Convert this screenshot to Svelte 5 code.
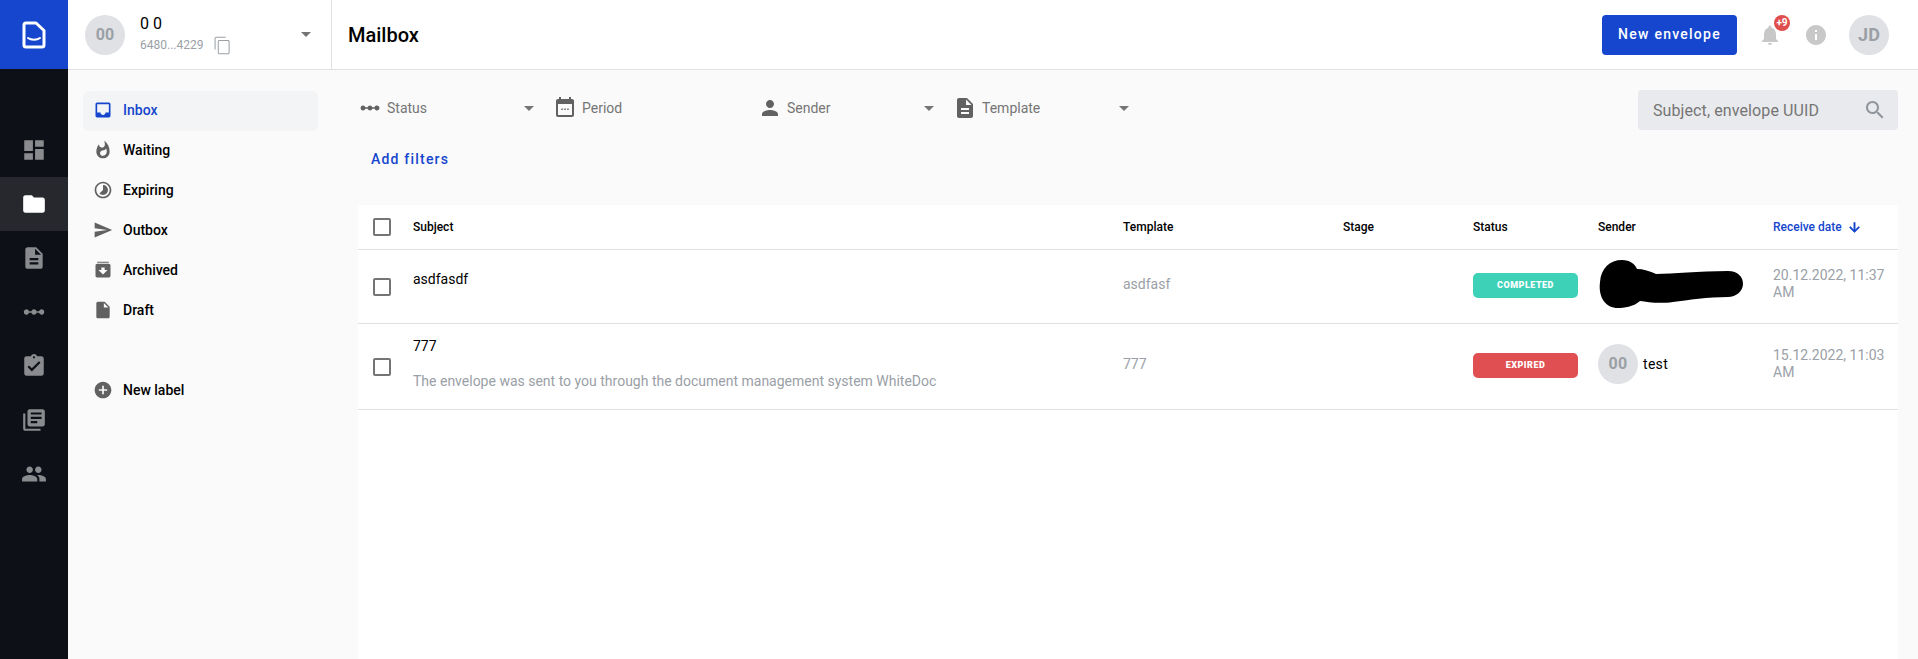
<script>
	// sidebar icons
	const railIcons = [
		'M3 13h8V3H3v10zm0 8h8v-6H3v6zm10 0h8V11h-8v10zm0-18v6h8V3h-8z',
		'M10 4H4c-1.1 0-1.99.9-1.99 2L2 18c0 1.1.9 2 2 2h16c1.1 0 2-.9 2-2V8c0-1.1-.9-2-2-2h-8l-2-2z',
		'M14 2H6c-1.1 0-1.99.9-1.99 2L4 20c0 1.1.89 2 1.99 2H18c1.1 0 2-.9 2-2V8l-6-6zm2 16H8v-2h8v2zm0-4H8v-2h8v2zm-3-5V3.5L18.5 9H13z',
		'M5 9.5a2.5 2.5 0 0 1 2.4 1.7h2.2a2.5 2.5 0 0 1 4.8 0h2.2a2.5 2.5 0 1 1 0 1.6h-2.2a2.5 2.5 0 0 1-4.8 0H7.4a2.5 2.5 0 1 1-2.4-3.3z',
		'M19 3h-4.18C14.4 1.84 13.3 1 12 1c-1.3 0-2.4.84-2.82 2H5c-1.1 0-2 .9-2 2v14c0 1.1.9 2 2 2h14c1.1 0 2-.9 2-2V5c0-1.1-.9-2-2-2zm-7 0c.55 0 1 .45 1 1s-.45 1-1 1-1-.45-1-1 .45-1 1-1zm-2 14l-4-4 1.41-1.41L10 14.17l6.59-6.59L18 9l-8 8z',
		'M4 6H2v14c0 1.1.9 2 2 2h14v-2H4V6zm16-4H8c-1.1 0-2 .9-2 2v12c0 1.1.9 2 2 2h12c1.1 0 2-.9 2-2V4c0-1.1-.9-2-2-2zm-1 9H9V9h10v2zm-4 4H9v-2h6v2zm4-8H9V5h10v2z',
		'M16 11c1.66 0 2.99-1.34 2.99-3S17.66 5 16 5c-1.66 0-3 1.34-3 3s1.34 3 3 3zm-8 0c1.66 0 2.99-1.34 2.99-3S9.66 5 8 5C6.34 5 5 6.34 5 8s1.34 3 3 3zm0 2c-2.33 0-7 1.17-7 3.5V19h14v-2.5c0-2.33-4.67-3.5-7-3.5zm8 0c-.29 0-.62.02-.97.05 1.16.84 1.97 1.97 1.97 3.45V19h6v-2.5c0-2.33-4.67-3.5-7-3.5z'
	];

	const boxes = [
		{ label: 'Inbox', active: true, d: 'M19 3H5c-1.1 0-2 .9-2 2v14c0 1.1.9 2 2 2h14c1.1 0 2-.9 2-2V5c0-1.1-.9-2-2-2zm0 12h-4c0 1.66-1.35 3-3 3s-3-1.34-3-3H5V5h14v10z' },
		{ label: 'Waiting', d: 'M13.5.67s.74 2.65.74 4.8c0 2.06-1.35 3.73-3.41 3.73-2.07 0-3.63-1.67-3.63-3.73l.03-.36C5.21 7.51 4 10.62 4 14c0 4.42 3.58 8 8 8s8-3.58 8-8C20 8.61 17.41 3.8 13.5.67zM11.71 19c-1.78 0-3.22-1.4-3.22-3.14 0-1.62 1.05-2.76 2.81-3.12 1.77-.36 3.6-1.21 4.62-2.58.39 1.29.59 2.65.59 4.04 0 2.65-2.15 4.8-4.8 4.8z' },
		{ label: 'Expiring', d: 'M16.24 7.76C15.07 6.59 13.54 6 12 6v6l-4.24 4.24c2.34 2.34 6.14 2.34 8.49 0 2.34-2.34 2.34-6.14-.01-8.48zM12 2C6.48 2 2 6.48 2 12s4.48 10 10 10 10-4.48 10-10S17.52 2 12 2zm0 18c-4.42 0-8-3.58-8-8s3.58-8 8-8 8 3.58 8 8-3.58 8-8 8z' },
		{ label: 'Outbox', d: 'M2.01 21L23 12 2.01 3 2 10l15 2-15 2z' },
		{ label: 'Archived', d: 'M5 2h14v1.2H5zM19 4.500H5c-1.1 0-2 .9-2 2V19c0 1.1.9 2 2 2h14c1.1 0 2-.9 2-2V6.500c0-1.100-.9-2-2-2zM12 17.500L6.500 12H10V9h4v3h3.500z' },
		{ label: 'Draft', d: 'M6 2c-1.1 0-1.99.9-1.99 2L4 20c0 1.1.89 2 1.99 2H18c1.1 0 2-.9 2-2V8l-6-6H6zm7 7V3.5L18.5 9H13z' }
	];

	const filters = [
		{ label: 'Status', arrow: true, d: railIcons[3] },
		{ label: 'Period', wide: true, d: 'M19 3h-1V1h-2v2H8V1H6v2H5c-1.11 0-1.99.9-1.99 2L3 19c0 1.1.89 2 2 2h14c1.1 0 2-.9 2-2V5c0-1.1-.9-2-2-2zm0 16H5V8h14v11zM8.300 12.500h1.500V14H8.300zm2.950 0h1.500V14h-1.500zm2.950 0h1.500V14h-1.500z' },
		{ label: 'Sender', arrow: true, d: 'M12 12c2.21 0 4-1.79 4-4s-1.79-4-4-4-4 1.79-4 4 1.79 4 4 4zm0 2c-2.67 0-8 1.34-8 4v2h16v-2c0-2.66-5.33-4-8-4z' },
		{ label: 'Template', arrow: true, d: railIcons[2] }
	];

	const rows = [
		{ subject: 'asdfasdf', note: '', template: 'asdfasf', status: 'COMPLETED', kind: 'done', sender: '', date: '20.12.2022, 11:37 AM' },
		{ subject: '777', note: 'The envelope was sent to you through the document management system WhiteDoc', template: '777', status: 'EXPIRED', kind: 'expired', sender: 'test', date: '15.12.2022, 11:03 AM' }
	];
</script>

<div class="app">
	<aside class="rail">
		<div class="logo">
			<svg width="24" height="28" viewBox="0 0 24 28" fill="none" stroke="#fff" stroke-width="3" stroke-linejoin="round" stroke-linecap="round">
				<path d="M4 2h10l8 7.5V24a2 2 0 0 1-2 2H4a2 2 0 0 1-2-2V4a2 2 0 0 1 2-2z" />
				<path d="M6 17c3 2.200 9 2.200 12 0" stroke-width="2" />
			</svg>
		</div>
		<nav class="rail-nav">
			{#each railIcons as d, i}
				<div class="rail-item" class:current={i === 1}>
					<svg width="26" height="26" viewBox="0 0 24 24"><path {d} /></svg>
				</div>
			{/each}
		</nav>
	</aside>

	<div class="page">
		<header class="topbar">
			<div class="account">
				<div class="avatar">00</div>
				<div class="account-text">
					<div class="account-name">0 0</div>
					<div class="account-id">
						6480...4229
						<svg class="copy" width="19" height="19" viewBox="0 0 24 24"><path d="M16 1H4c-1.1 0-2 .9-2 2v14h1.300V2.300H16V1zm3 4H8c-1.1 0-2 .9-2 2v14c0 1.1.9 2 2 2h11c1.1 0 2-.9 2-2V7c0-1.1-.9-2-2-2zm.7 16c0 .4-.3.7-.7.7H8c-.4 0-.7-.3-.7-.7V7c0-.4.3-.7.7-.7h11c.4 0 .7.3.7.7v14z" /></svg>
					</div>
				</div>
				<span class="caret account-caret"></span>
			</div>
			<h1>Mailbox</h1>
			<button class="new-btn">New envelope</button>
			<div class="bell">
				<svg width="24" height="24" viewBox="0 0 24 24"><path d="M12 22c1.1 0 2-.9 2-2h-4c0 1.1.89 2 2 2zm6-6v-5c0-3.07-1.64-5.64-4.5-6.32V4c0-.83-.67-1.5-1.5-1.5s-1.5.67-1.5 1.5v.68C7.63 5.36 6 7.92 6 11v5l-2 2v1h16v-1l-2-2z" /></svg>
				<span class="badge">+9</span>
			</div>
			<svg class="info" width="24" height="24" viewBox="0 0 24 24"><path d="M12 2C6.48 2 2 6.48 2 12s4.48 10 10 10 10-4.48 10-10S17.52 2 12 2zm1 15h-2v-6h2v6zm0-8h-2V7h2v2z" /></svg>
			<div class="avatar user">JD</div>
		</header>

		<div class="body">
			<nav class="boxes">
				{#each boxes as box}
					<div class="box" class:active={box.active}>
						<svg width="20" height="20" viewBox="0 0 24 24"><path fill-rule="evenodd" d={box.d} /></svg>
						{box.label}
					</div>
				{/each}
				<div class="box new-label">
					<svg width="20" height="20" viewBox="0 0 24 24"><path d="M12 2C6.48 2 2 6.48 2 12s4.48 10 10 10 10-4.48 10-10S17.52 2 12 2zm5 11h-4v4h-2v-4H7v-2h4V7h2v4h4v2z" /></svg>
					New label
				</div>
			</nav>

			<main class="content">
				<div class="toolbar">
					<div class="filters">
						{#each filters as f}
							<div class="filter" class:wide={f.wide}>
								<svg width="24" height="24" viewBox="0 0 24 24"><path d={f.d} /></svg>
								<span>{f.label}</span>
								{#if f.arrow}<span class="caret"></span>{/if}
							</div>
						{/each}
					</div>
					<div class="search">
						<span>Subject, envelope UUID</span>
						<svg width="24" height="24" viewBox="0 0 24 24"><path d="M15.5 14h-.79l-.28-.27C15.41 12.59 16 11.11 16 9.5 16 5.91 13.09 3 9.5 3S3 5.91 3 9.5 5.91 16 9.5 16c1.61 0 3.09-.59 4.23-1.57l.27.28v.79l5 4.99L20.49 19l-4.99-5zm-6 0C7.01 14 5 11.99 5 9.5S7.01 5 9.5 5 14 7.01 14 9.5 11.99 14 9.5 14z" /></svg>
					</div>
				</div>
				<button class="add-filters">Add filters</button>

				<section class="table">
					<div class="row head">
						<span class="check"></span>
						<span>Subject</span>
						<span>Template</span>
						<span>Stage</span>
						<span>Status</span>
						<span>Sender</span>
						<span class="sorted">
							Receive date
							<svg width="15" height="15" viewBox="0 0 24 24"><path d="M20 12l-1.41-1.41L13 16.17V4h-2v12.17l-5.58-5.59L4 12l8 8 8-8z" /></svg>
						</span>
					</div>
					{#each rows as row}
						<div class="row">
							<span class="check down"></span>
							<div>
								<div class="subject">{row.subject}</div>
								{#if row.note}
									<div class="note">{row.note}</div>
								{:else}
									<div class="no-note"></div>
								{/if}
							</div>
							<span class="muted">{row.template}</span>
							<span></span>
							<span class="pill {row.kind}">{row.status}</span>
							<div class="sender">
								{#if row.sender}
									<div class="avatar">00</div>
									<span>{row.sender}</span>
								{:else}
									<!-- redacted in the source picture -->
									<svg class="blot" width="145" height="48" viewBox="0 0 145 48"><path d="M2 22C3 8 12 0 24 0c8 0 13 4 15 9 6 0 13 2 19 5 17 0 42-3 72-3 10 0 15 6 15 13s-7 13-15 13c-20 0-40 3-55 5-15 2-25 0-33-1-7 6-16 7-22 7C8 48 0 38 2 22z" /></svg>
								{/if}
							</div>
							<span class="muted date">{row.date}</span>
						</div>
					{/each}
				</section>
			</main>
		</div>
	</div>
</div>

<style>
	:global(body) {
		margin: 0;
		font-family: Roboto, "Liberation Sans", sans-serif;
		overflow: hidden;
	}

	.app {
		display: flex;
		height: 100vh;
		background: #fafafa;
		color: #000;
		font-size: 14px;
	}

	/* left rail */
	.rail {
		width: 68px;
		flex: none;
		background: #0d1117;
	}

	.logo {
		height: 69px;
		background: #1546cd;
		display: flex;
		align-items: center;
		justify-content: center;
	}

	.rail-nav {
		padding-top: 54px;
	}

	.rail-item {
		height: 54px;
		display: flex;
		align-items: center;
		justify-content: center;
		fill: #8a8b8e;
	}

	.rail-item.current {
		background: #26282d;
		fill: #fff;
	}

	.page {
		flex: 1;
		min-width: 0;
		display: flex;
		flex-direction: column;
	}

	/* top bar */
	.topbar {
		height: 69px;
		flex: none;
		display: flex;
		align-items: center;
		background: #fff;
		border-bottom: 1px solid #e0e0e0;
		padding-right: 29px;
	}

	.account {
		width: 264px;
		height: 100%;
		flex: none;
		box-sizing: border-box;
		display: flex;
		align-items: center;
		padding-left: 17px;
		border-right: 1px solid #e0e0e0;
	}

	.avatar {
		width: 40px;
		height: 40px;
		flex: none;
		border-radius: 50%;
		background: #dfe1e4;
		color: #9aa0a6;
		font-size: 16px;
		font-weight: 700;
		display: flex;
		align-items: center;
		justify-content: center;
	}

	.account-text {
		margin-left: 15px;
	}

	.account-name {
		font-size: 16px;
		line-height: 20px;
	}

	.account-id {
		display: flex;
		align-items: center;
		gap: 10px;
		font-size: 12px;
		color: #9aa0a6;
		height: 20px;
		margin-top: 1px;
	}

	.copy {
		fill: #9aa0a6;
		margin-top: 1px;
	}

	.caret {
		width: 0;
		height: 0;
		margin-left: auto;
		margin-right: 2px;
		border-left: 5px solid transparent;
		border-right: 5px solid transparent;
		border-top: 5px solid #757575;
	}

	.account-caret {
		margin-right: 20px;
	}

	h1 {
		margin: 0 auto 0 16px;
		font-size: 20px;
		font-weight: 500;
	}

	.new-btn {
		width: 135px;
		height: 40px;
		padding: 0 0 2px;
		border: none;
		border-radius: 4px;
		background: #1546cd;
		color: #fff;
		font: 500 14px Roboto, sans-serif;
		letter-spacing: 1.25px;
	}

	.bell {
		position: relative;
		width: 24px;
		height: 24px;
		margin-left: 21px;
		fill: #c8c8c8;
	}

	.badge {
		position: absolute;
		left: 16px;
		top: -8px;
		width: 16px;
		height: 16px;
		border-radius: 50%;
		background: #e04f4f;
		color: #fff;
		font-size: 10px;
		font-weight: 700;
		line-height: 16px;
		text-align: center;
	}

	.info {
		margin-left: 22px;
		fill: #c8c8c8;
	}

	.user {
		margin-left: 21px;
		font-size: 18px;
	}

	/* mailbox list */
	.body {
		flex: 1;
		min-height: 0;
		display: flex;
	}

	.boxes {
		width: 290px;
		flex: none;
		box-sizing: border-box;
		padding: 21px 0 0 15px;
	}

	.box {
		width: 235px;
		height: 40px;
		box-sizing: border-box;
		display: flex;
		align-items: center;
		gap: 10px;
		padding: 0 0 2px 10px;
		border-radius: 6px;
		font-weight: 500;
		fill: #616161;
	}

	.box.active {
		background: #f3f4f6;
		color: #1546cd;
		fill: #1546cd;
	}

	.new-label {
		margin-top: 40px;
	}

	/* main */
	.content {
		flex: 1;
		min-width: 0;
		display: flex;
		flex-direction: column;
		padding: 20px 20px 0 0;
	}

	.toolbar {
		display: flex;
		justify-content: space-between;
		height: 40px;
	}

	.filters {
		display: flex;
		gap: 17px;
		height: 36px;
	}

	.filter {
		width: 178px;
		display: flex;
		align-items: center;
		gap: 5px;
		color: #757575;
		fill: #616161;
	}

	.filter.wide {
		width: 188px;
	}

	.search {
		width: 260px;
		box-sizing: border-box;
		display: flex;
		align-items: center;
		justify-content: space-between;
		padding: 0 11px 0 15px;
		background: #e9eaed;
		border-radius: 4px;
		color: #757575;
		fill: #8f959b;
		font-size: 16px;
		letter-spacing: 0.1px;
	}

	.add-filters {
		align-self: flex-start;
		height: 36px;
		margin: 11px 0 28px 13px;
		padding: 0;
		border: none;
		background: none;
		color: #1546cd;
		font: 500 14px Roboto, sans-serif;
		letter-spacing: 1.2px;
	}

	.table {
		flex: 1;
		background: #fff;
		border-radius: 4px 4px 0 0;
	}

	.row {
		display: grid;
		grid-template-columns: 55px 710px 220px 130px 125px 175px 1fr;
		align-items: center;
		box-sizing: border-box;
		padding: 12px 0 18px;
		border-bottom: 1px solid #e0e0e0;
	}

	.row.head {
		height: 45px;
		padding: 0;
		font-size: 12px;
		font-weight: 500;
	}

	.check {
		width: 18px;
		height: 18px;
		box-sizing: border-box;
		margin-left: 15px;
		border: 2px solid #757575;
		border-radius: 2px;
	}

	.check.down {
		margin-top: 7px;
	}

	.sorted {
		display: flex;
		align-items: center;
		gap: 5px;
		color: #1546cd;
		fill: #1546cd;
		stroke: #1546cd;
	}

	.subject {
		line-height: 20px;
	}

	.note {
		margin-top: 15px;
		line-height: 20px;
		color: #9aa0a6;
	}

	.no-note {
		height: 10px;
	}

	.muted {
		color: #9aa0a6;
	}

	.date {
		line-height: 17px;
		padding-right: 8px;
	}

	.pill {
		width: 105px;
		height: 25px;
		margin-top: 4px;
		border-radius: 5px;
		color: #fff;
		font-size: 9px;
		font-weight: 900;
		letter-spacing: 0.5px;
		line-height: 25px;
		text-align: center;
	}

	.done {
		background: #3dd1b8;
	}

	.expired {
		background: #e05052;
	}

	.sender {
		display: flex;
		align-items: center;
		gap: 5px;
		letter-spacing: 0.3px;
	}

	.blot {
		margin: -2.5px 0;
		fill: #000;
	}
</style>
